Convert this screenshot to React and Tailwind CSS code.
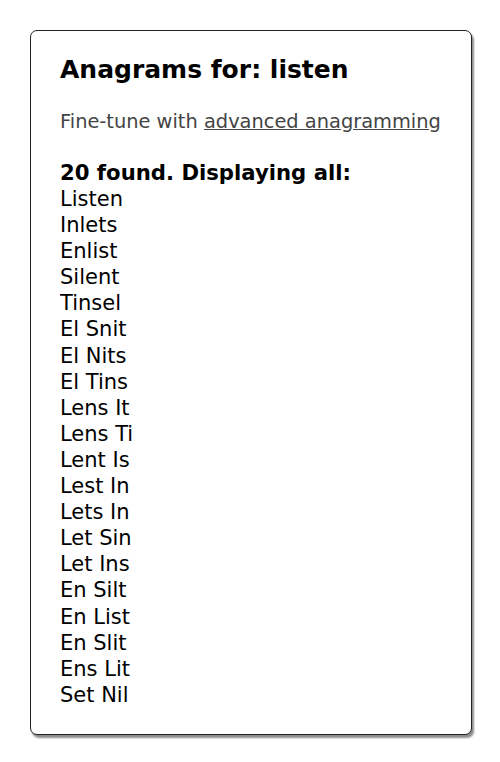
const WORDS = [
  "Listen", "Inlets", "Enlist", "Silent", "Tinsel",
  "El Snit", "El Nits", "El Tins", "Lens It", "Lens Ti",
  "Lent Is", "Lest In", "Lets In", "Let Sin", "Let Ins",
  "En Silt", "En List", "En Slit", "Ens Lit", "Set Nil",
];

export default function App() {
  return (
    <div className="min-h-[762px] bg-white pt-[30px] pl-[30px] font-['DejaVu_Sans',Verdana,sans-serif]">
      <div className="w-[442px] h-[705px] rounded-[7px] border-[1.5px] border-[#222] bg-white shadow-[2px_3px_2px_rgba(0,0,0,0.45)] pl-[29px] pt-[24px] overflow-hidden">
        <h1 className="text-[25px] leading-[30px] font-bold text-black">Anagrams for: listen</h1>
        <p className="mt-[25px] text-[19.4px] leading-[24px] text-[#444]">
          Fine-tune with <a href="#" className="underline">advanced anagramming</a>
        </p>
        <h2 className="mt-[25px] text-[21.2px] leading-[27px] font-bold text-black">20 found. Displaying all:</h2>
        <ul className="h-[516px] overflow-hidden">
          {WORDS.map((w) => (
            <li key={w} className="text-[21px] leading-[26.1px] text-black">{w}</li>
          ))}
        </ul>
      </div>
    </div>
  );
}
